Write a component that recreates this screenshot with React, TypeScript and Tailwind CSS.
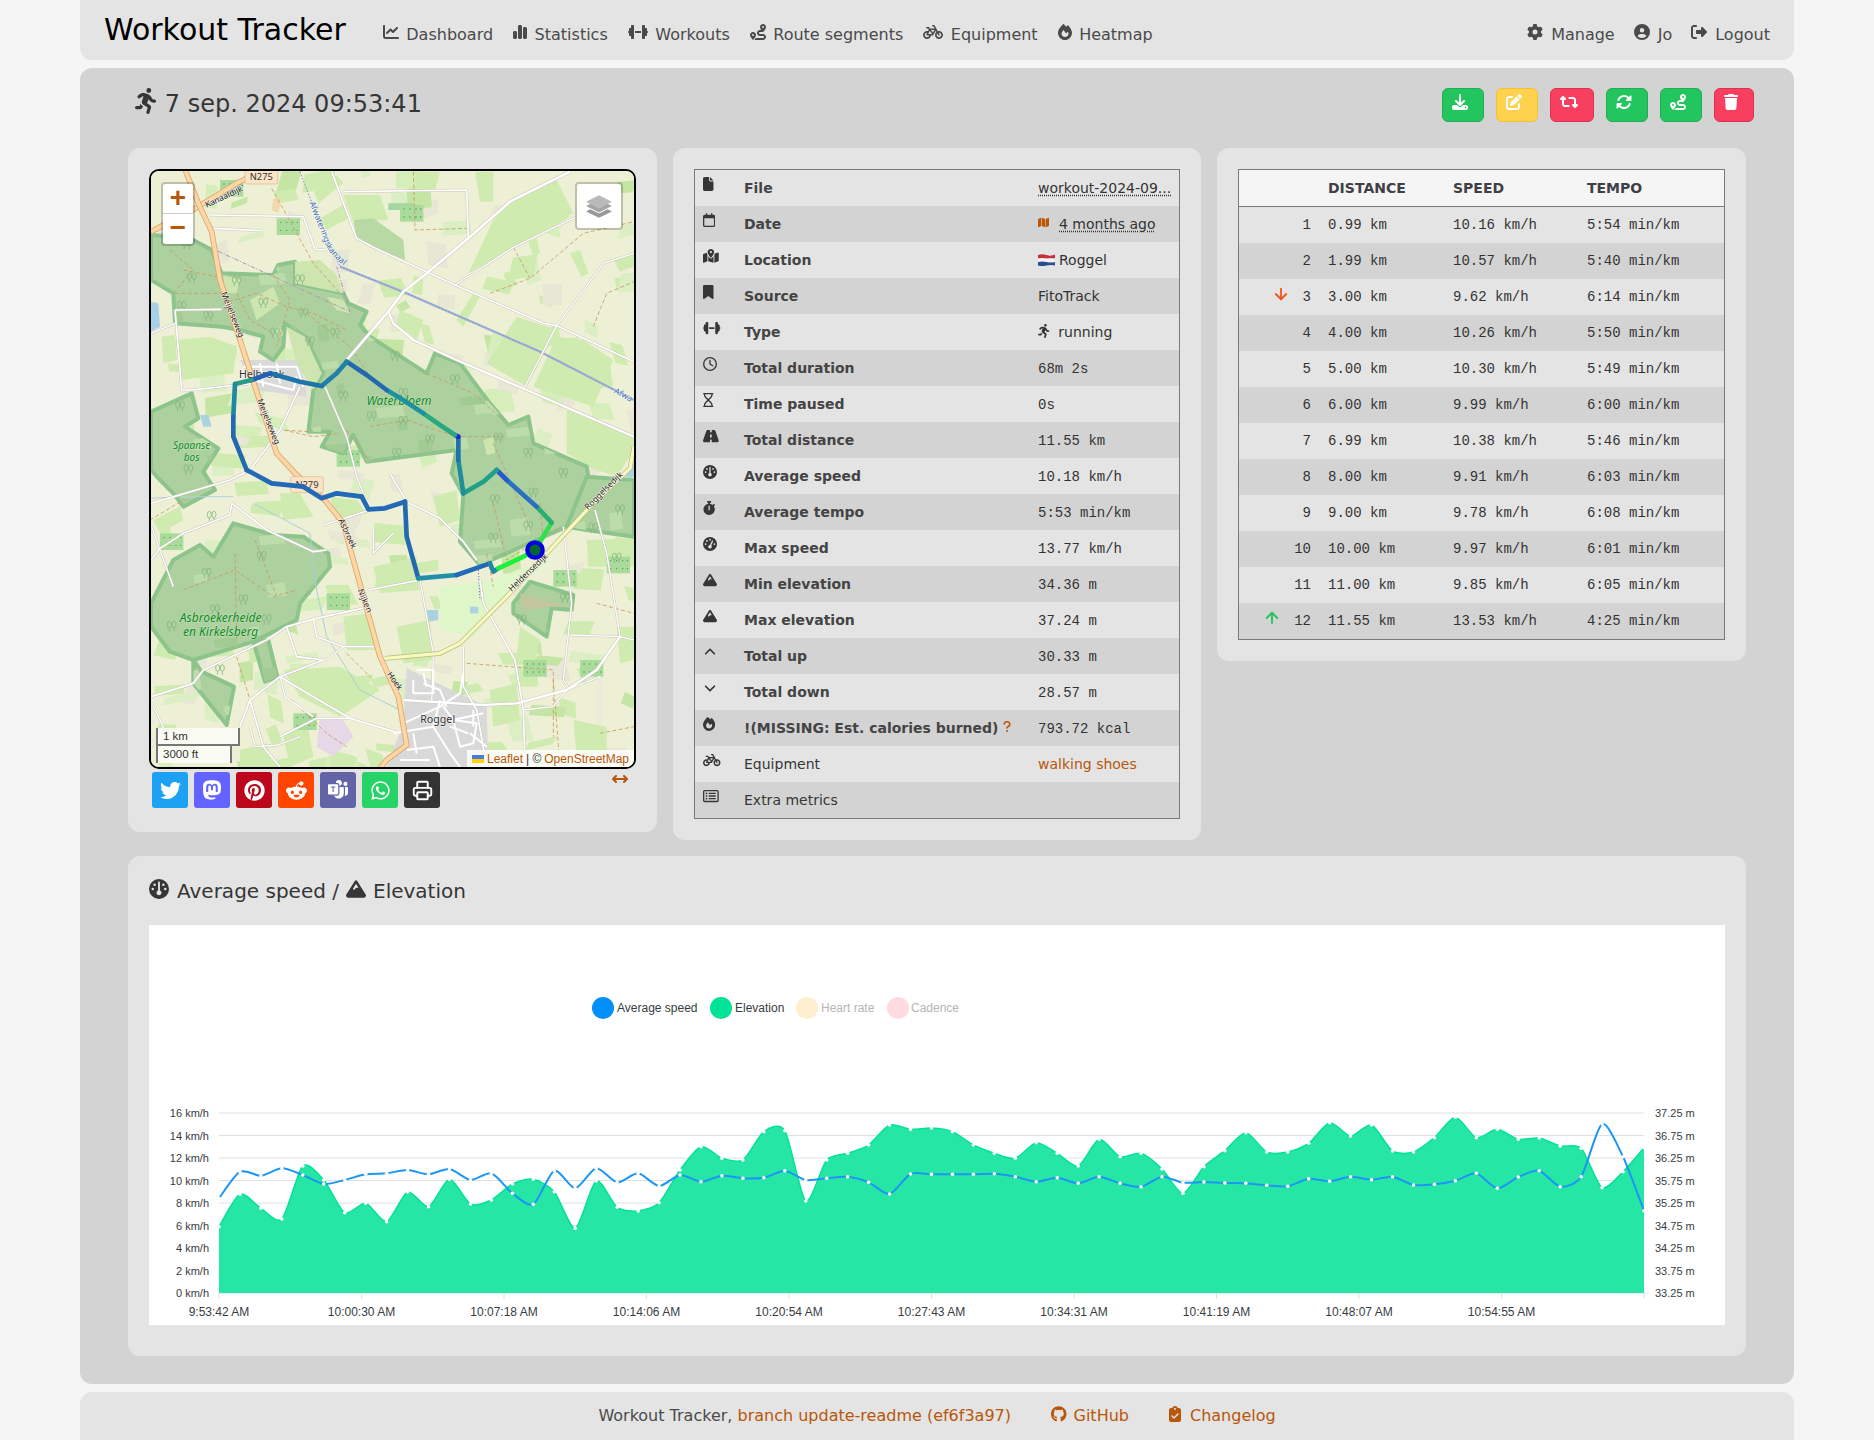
import React from "react";
import {
  FaBicycle, FaBookmark, FaChartLine, FaChartSimple, FaCircleUser, FaClipboardCheck, FaDownload, FaDumbbell, FaFile,
  FaFire, FaGauge, FaGaugeHigh, FaGear, FaGithub, FaMap, FaMapLocationDot, FaMastodon, FaMountain, FaPenToSquare,
  FaPersonRunning, FaPinterest, FaQuestion, FaRedditAlien, FaRetweet, FaRightFromBracket, FaRoad, FaRoute, FaRotate,
  FaStopwatch, FaTrash, FaTwitter, FaWhatsapp, FaAngleUp, FaAngleDown, FaRegCalendar, FaRegClock, FaRegHourglass, FaRegRectangleList, FaArrowsLeftRight,
} from "react-icons/fa6";
import { BsMicrosoftTeams } from "react-icons/bs";
import { ArrowDown, ArrowUp, Printer } from "lucide-react";

const sans = "font-['DejaVu_Sans',sans-serif]";
const mono = "font-['Liberation_Mono',monospace]";
const orange = "text-[#b85709]";

const navLeft = [
  { icon: <FaChartLine className="h-[16px] w-[16px]" />, label: "Dashboard" },
  { icon: <FaChartSimple className="h-[16px] w-[14px]" />, label: "Statistics" },
  { icon: <FaDumbbell className="h-[16px] w-[20px]" />, label: "Workouts" },
  { icon: <FaRoute className="h-[16px] w-[16px]" />, label: "Route segments" },
  { icon: <FaBicycle className="h-[16px] w-[20px]" />, label: "Equipment" },
  { icon: <FaFire className="h-[16px] w-[14px]" />, label: "Heatmap" },
];
const navRight = [
  { icon: <FaGear className="h-[16px] w-[16px]" />, label: "Manage" },
  { icon: <FaCircleUser className="h-[16px] w-[16px]" />, label: "Jo" },
  { icon: <FaRightFromBracket className="h-[16px] w-[16px]" />, label: "Logout" },
];

const infoRows: { icon: React.ReactNode; label: string; value: React.ReactNode; plain?: boolean }[] = [
  { icon: <FaFile className="h-[14px] w-[10.5px]" />, label: "File", value: <span className="underline decoration-dotted underline-offset-2">workout-2024-09...</span> },
  {
    icon: <FaRegCalendar className="h-[14px] w-[12.25px]" />, label: "Date",
    value: (
      <span className="flex items-center gap-[10px]">
        <FaMap preserveAspectRatio="none" className={`h-[11px] w-[11px] -mt-[3px] ${orange}`} />
        <span className="underline decoration-dotted underline-offset-2">4 months ago</span>
      </span>
    ),
  },
  {
    icon: <FaMapLocationDot className="h-[14px] w-[15.75px]" />, label: "Location",
    value: (
      <span className="flex items-center gap-[4px]">
        <svg viewBox="0 0 17 12" className="w-[17px] h-[12px]">
          <path d="M0 1Q4 -.5 8.500 1T17 .5V4.500Q13 3.500 8.500 4.500T0 4.500Z" fill="#c8313e" />
          <path d="M0 4.500Q4 3.500 8.500 4.500T17 4.500V8Q13 7 8.500 8T0 8Z" fill="#f5f5f5" />
          <path d="M0 8Q4 7 8.500 8T17 8V11.500Q13 10.500 8.500 11.500T0 11.500Z" fill="#2a4d95" />
        </svg>
        Roggel
      </span>
    ),
  },
  { icon: <FaBookmark className="h-[14px] w-[10.5px]" />, label: "Source", value: "FitoTrack" },
  {
    icon: <FaDumbbell className="h-[14px] w-[17.5px]" />, label: "Type",
    value: (
      <span className="flex items-center gap-2">
        <FaPersonRunning className="h-[14px] w-[12.25px] -mt-[3px]" />
        running
      </span>
    ),
  },
  { icon: <FaRegClock className="h-[14px] w-[14px]" />, label: "Total duration", value: <span className={mono}>68m 2s</span> },
  { icon: <FaRegHourglass className="h-[14px] w-[10.5px]" />, label: "Time paused", value: <span className={mono}>0s</span> },
  { icon: <FaRoad className="h-[14px] w-[15.75px]" />, label: "Total distance", value: <span className={mono}>11.55 km</span> },
  { icon: <FaGauge className="h-[14px] w-[14px]" />, label: "Average speed", value: <span className={mono}>10.18 km/h</span> },
  { icon: <FaStopwatch className="h-[14px] w-[12.25px]" />, label: "Average tempo", value: <span className={mono}>5:53 min/km</span> },
  { icon: <FaGaugeHigh className="h-[14px] w-[14px]" />, label: "Max speed", value: <span className={mono}>13.77 km/h</span> },
  { icon: <FaMountain className="h-[14px] w-[14px]" />, label: "Min elevation", value: <span className={mono}>34.36 m</span> },
  { icon: <FaMountain className="h-[14px] w-[14px]" />, label: "Max elevation", value: <span className={mono}>37.24 m</span> },
  { icon: <FaAngleUp className="h-[14px] w-[14px]" />, label: "Total up", value: <span className={mono}>30.33 m</span> },
  { icon: <FaAngleDown className="h-[14px] w-[14px]" />, label: "Total down", value: <span className={mono}>28.57 m</span> },
  {
    icon: <FaFire className="h-[14px] w-[12.25px]" />,
    label: "!(MISSING: Est. calories burned)",
    value: <span className={mono}>793.72 kcal</span>,
  },
  { icon: <FaBicycle className="h-[14px] w-[17.5px]" />, label: "Equipment", plain: true, value: <span className={orange}>walking shoes</span> },
  { icon: <FaRegRectangleList className="h-[14px] w-[15.75px]" />, label: "Extra metrics", plain: true, value: "" },
];

const laps = [
  ["1", "0.99 km", "10.16 km/h", "5:54 min/km"],
  ["2", "1.99 km", "10.57 km/h", "5:40 min/km"],
  ["3", "3.00 km", "9.62 km/h", "6:14 min/km"],
  ["4", "4.00 km", "10.26 km/h", "5:50 min/km"],
  ["5", "5.00 km", "10.30 km/h", "5:49 min/km"],
  ["6", "6.00 km", "9.99 km/h", "6:00 min/km"],
  ["7", "6.99 km", "10.38 km/h", "5:46 min/km"],
  ["8", "8.00 km", "9.91 km/h", "6:03 min/km"],
  ["9", "9.00 km", "9.78 km/h", "6:08 min/km"],
  ["10", "10.00 km", "9.97 km/h", "6:01 min/km"],
  ["11", "11.00 km", "9.85 km/h", "6:05 min/km"],
  ["12", "11.55 km", "13.53 km/h", "4:25 min/km"],
];

// map drawing, coordinates are 3x page pixels from the map corner region
const forests = [
  "33,225 150,235 215,270 245,340 400,345 415,315 465,305 465,370 610,400 625,430 680,455 660,495 690,530 860,640 885,580 960,610 1050,730 1105,795 1165,770 1180,850 1340,920 1345,950 1280,1100 1190,1140 1020,1215 960,1145 970,1005 935,940 950,870 680,905 640,825 610,880 545,860 570,815 505,815 520,690 550,640 495,530 435,490 430,560 400,600 360,575 370,530 300,510 245,500 105,490 100,400 33,360",
  "33,755 155,700 175,775 135,800 235,865 190,935 225,990 130,1040 100,1000 60,960 33,930",
  "33,1330 100,1200 180,1155 220,1190 280,1090 400,1125 490,1130 565,1180 570,1220 480,1330 470,1380 340,1445 160,1500 90,1475 33,1400",
  "340,1445 385,1440 412,1550 375,1565",
  "160,1500 185,1535 282,1580 260,1695 160,1570",
  "1120,1330 1170,1265 1300,1305 1295,1350 1235,1345 1220,1430 1120,1360",
  "1280,1100 1340,950 1482,960 1482,1130 1340,1110",
];
const pale = [
  "465,305 540,300 590,345 610,400 465,370",
  "330,420 400,380 420,430 350,480",
  "560,410 610,420 630,460 590,450",
  "1030,840 1060,830 1065,880 1040,885",
  "440,500 495,530 545,640 520,690 470,610",
  "250,345 300,360 290,400 255,400",
];
const meadow = [
  "400,95 465,85 475,120 415,130", "520,90 590,45 610,70 535,130", "540,175 620,130 625,175 560,210", "610,105 720,105 745,180 640,185",
  "820,35 900,35 885,90 825,90", "1005,35 1060,35 1060,125 1020,125", "1060,180 1110,125 1210,75 1290,170 1125,262 1060,300 985,340",
  "1210,75 1250,60 1300,160 1260,175", "1165,245 1190,235 1200,280 1180,290", "1090,340 1120,330 1130,375 1105,385", "1290,280 1320,270 1345,340 1325,350",
  "1420,300 1482,280 1482,320 1440,335", "950,480 1000,400 1020,410 970,500", "780,450 850,480 830,540 770,490", "1040,610 1130,470 1250,510 1160,680",
  "1250,530 1330,540 1420,600 1360,740 1180,680", "1280,750 1482,830 1482,870 1430,950 1345,920 1280,880", "105,540 210,530 290,560 280,640 125,660",
  "175,570 290,555 290,590 175,600", "65,530 105,525 110,600 70,610", "570,1010 650,1020 680,1060 590,1080", "60,1100 85,1085 100,1150 70,1160",
  "555,1275 625,1275 655,1335 575,1330", "1340,1140 1482,1135 1482,1220 1345,1220", "1130,1520 1190,1515 1195,1580 1145,1580", "1310,1525 1370,1530 1330,1570",
  "430,1530 600,1520 720,1590 600,1670 480,1610", "1050,1590 1130,1570 1140,1680 1060,1700", "1300,1680 1400,1700 1400,1780 1310,1790",
  "700,1220 830,1190 840,1290 720,1300", "880,1010 950,990 960,1080 900,1100", "1330,1000 1400,1080 1380,1120 1320,1090",
  "610,1370 690,1360 720,1470 620,1470", "770,1400 870,1380 880,1500 790,1510", "300,1770 380,1750 400,1821 300,1821", "430,1730 500,1680 520,1790 450,1821", "580,1770 650,1790 640,1821 570,1821",
  "40,1080 120,1040 130,1080 60,1120", "420,1000 480,1000 520,1070 430,1080", "1140,1400 1200,1440 1180,1530 1130,1500", "1430,1400 1482,1400 1482,1500 1440,1510",
];
const tracks = [
  "90,270 160,330 100,400 200,400 245,400", "130,330 230,350", "290,400 330,480 400,520", "250,430 350,400 440,440 520,460 620,510", "400,345 450,420 410,560",
  "500,460 630,560 690,650", "395,85 520,310 600,400", "820,35 825,210 985,205", "860,640 1000,700 1100,790", "620,810 690,905", "690,800 800,780 950,830 1100,830",
  "1050,400 1170,355 1330,220 1482,185", "1120,262 1170,355", "1360,500 1400,400 1482,365", "505,815 430,810 520,830 600,820", "1060,850 1170,1100", "1060,1030 1100,1200 1260,1100", "1200,1030 1210,1140",
  "130,1290 285,1230 400,1310 470,1290", "285,1180 290,1440", "345,1140 410,1310", "30,1080 130,1020 150,1020", "290,1490 330,1620", "455,1620 560,1720 620,1760", "620,1480 700,1560", "980,1510 1240,1530 1240,1730",
  "1240,1560 1260,1821", "1380,1720 1482,1700", "1370,1330 1482,1360", "1040,1180 1060,1280",
];
const whiteRoads: [string, number][] = [
  ["575,35 650,235 700,262 945,375 1210,490 1250,497 1482,605", 5],
  ["1290,35 1110,125 985,235 860,340 790,395 745,455 620,600", 8],
  ["610,95 980,90 985,235", 5],
  ["745,455 760,490 820,540 950,600 1160,690 1482,830", 7],
  ["945,375 1120,262 1310,170", 4],
  ["1250,497 1390,310 1482,280", 4],
  ["1250,497 1150,690", 4],
  ["210,165 490,170 525,268 560,270", 5],
  ["215,205 365,212", 5],
  ["105,450 245,448", 5],
  ["105,450 125,690 155,690 340,670", 5],
  ["33,520 105,490", 4],
  ["555,680 620,830 650,950 670,1000", 4],
  ["480,680 420,810 330,930 270,960 33,1030", 5],
  ["275,1030 270,1065 130,1120 60,1165 33,1200", 5],
  ["275,1030 380,1110 520,1175 560,1170", 5],
  ["750,940 800,1025 900,1075 970,1145 1010,1200", 5],
  ["800,1025 690,1050 550,1095", 5],
  ["840,1260 880,1480 875,1630", 4],
  ["685,1290 840,1260", 4],
  ["690,1340 530,1375 440,1400 380,1440", 5],
  ["1020,1260 1030,1330 1125,1500 1150,1650 1155,1821", 5],
  ["1365,1050 1400,1180 1440,1430 1482,1440", 4],
  ["1440,1430 1370,1530 1280,1590 1130,1630 1030,1635 790,1620", 7],
  ["1270,1100 1295,1330 1270,1560 1290,1590", 4],
  ["1280,1590 1380,1550 1380,1690", 4],
  ["520,1375 530,1430 610,1460 720,1460", 5],
  ["440,1400 470,1490 550,1500 420,1550 330,1620 300,1700", 5],
  ["33,1610 130,1580 160,1570", 5],
  ["420,1550 520,1610 630,1675 780,1720", 5],
  ["330,1620 370,1760 420,1821", 5],
  ["420,1730 530,1675 640,1675", 5],
  ["33,1760 70,1700 40,1640", 4],
  ["970,1460 970,1580 1010,1650 1040,1821", 5],
  ["700,1110 700,1180 760,1120", 4],
  ["160,1570 190,1530 380,1440", 5],
  ["1290,1425 1440,1430", 4],
  ["35,1100 60,1170 100,1280", 4],
  ["420,1550 435,1610 520,1670", 4],
  ["330,1700 345,1760 415,1755 480,1730", 4],
  ["610,1460 550,1505", 4],
  ["1150,1650 1240,1640 1280,1590", 4],
];
const villageRoads = [
  "830,1530 880,1530 880,1600 820,1600 820,1560", "850,1570 900,1590 920,1640", "790,1690 900,1640 960,1600 970,1540", "910,1640 940,1680 1030,1660", "940,1680 1010,1690 1000,1750 960,1760 940,1680",
  "760,1720 880,1700 930,1780 960,1821", "800,1770 880,1760 900,1821", "880,1700 900,1620", "990,1720 1040,1760", "780,1800 870,1800", "850,1540 860,1580", "1000,1650 1000,1700", "930,1700 985,1720", "820,1720 830,1780",
  "310,620 470,620 490,680", "340,660 460,690 470,650", "360,610 370,680", "410,610 420,670",
];
const trees = [
  [155, 355], [290, 365], [125, 440], [205, 470], [370, 430], [480, 360], [490, 460], [405, 520], [585, 520], [510, 545], [765, 590], [610, 710], [695, 770], [790, 700], [790, 785],
  [945, 660], [870, 840], [770, 880], [1075, 835], [1165, 880], [1270, 940], [1065, 1020], [1165, 1100], [1060, 1135], [1180, 1000], [120, 740], [145, 930], [215, 1070],
  [200, 1240], [310, 1320], [365, 1190], [95, 1400], [380, 1380], [225, 1350], [240, 1530], [1440, 1050], [1360, 1105], [1145, 1380], [1275, 1315], [1430, 1195], [140, 255],
];
type Seg = [string, string];
const route: Seg[] = [
  ["1185,1170 1235,1088", "#2fe04c"],
  ["1235,1088 1190,1040", "#27b070"],
  ["1190,1040 1100,960", "#2a70c0"],
  ["1100,960 1070,930", "#2858d0"],
  ["1070,930 1030,965 970,1000", "#20a088"],
  ["970,1000 955,900", "#1f8e98"],
  ["955,900 955,830", "#2070b0"],
  ["955,830 945,825", "#1a24e0"],
  ["945,825 900,795 850,760", "#2aa880"],
  ["850,760 790,720 740,690", "#2090a0"],
  ["740,690 680,645 620,605", "#2468b0"],
  ["620,605 590,640 545,678", "#2080a8"],
  ["545,678 480,665 390,640", "#1c74a8"],
  ["390,640 335,660", "#2060b8"],
  ["335,660 285,672", "#2a9a88"],
  ["285,672 280,770", "#2088a0"],
  ["280,770 280,830 320,930", "#2468b0"],
  ["320,930 395,970 490,980", "#2468b8"],
  ["490,980 545,1015 590,1000 665,1010", "#2468b8"],
  ["665,1010 685,1048 735,1045 795,1025", "#2468b8"],
  ["795,1025 800,1130 835,1255", "#2468b0"],
  ["835,1255 950,1245", "#2090a8"],
  ["950,1245 1050,1210", "#2468b8"],
  ["1050,1210 1060,1235 1075,1225", "#2088a0"],
  ["1075,1225 1150,1190 1185,1170", "#1ef03a"],
];

// small field texture, same result on every render
let seed = 11;
const rnd = () => {
  seed = (seed * 16807) % 2147483647;
  return seed / 2147483647;
};
const fieldColors = ["#cfebb0", "#d6efba", "#c4e5a4", "#e8e6d4", "#dbeec4", "#cfebb0"];
const fields = Array.from({ length: 230 }, () => {
  const x = 33 + rnd() * 1449;
  const y = 33 + rnd() * 1788;
  const w = 25 + rnd() * 80;
  const h = 18 + rnd() * 55;
  const sx = (rnd() - 0.5) * 40;
  const sy = (rnd() - 0.5) * 40;
  return {
    points: `${x},${y} ${x + w},${y + sy} ${x + w + sx},${y + sy + h} ${x + sx},${y + h}`,
    fill: fieldColors[Math.floor(rnd() * fieldColors.length)],
  };
});
const forestPatches = Array.from({ length: 110 }, () => {
  const x = 33 + rnd() * 1449;
  const y = 200 + rnd() * 1500;
  const w = 20 + rnd() * 60;
  const h = 12 + rnd() * 40;
  return { points: `${x},${y} ${x + w},${y - 8} ${x + w + 8},${y + h} ${x + 6},${y + h + 6}`, fill: rnd() > 0.5 ? "#bcdcaa" : "#a2cb94" };
});
const orchards = [[410, 175], [780, 135], [240, 60], [1150, 1500], [1320, 1500], [560, 1300], [460, 1660], [590, 870], [1400, 1190], [1240, 1230], [60, 1120]];

function Tree({ x, y }: { x: number; y: number }) {
  return (
    <g fill="none" stroke="#84b67e" strokeWidth="2.5">
      <ellipse cx={x - 7} cy={y - 6} rx="6" ry="10" />
      <ellipse cx={x + 7} cy={y - 6} rx="6" ry="10" />
      <path d={`M${x - 7} ${y + 4}v10M${x + 7} ${y + 4}v10`} />
    </g>
  );
}

function RoadLabel({ x, y, rot, children, size = 25, fill = "#222" }: { x: number; y: number; rot: number; children: string; size?: number; fill?: string }) {
  return (
    <text
      x={x} y={y} fontSize={size} fill={fill} textAnchor="middle" fontFamily="Noto Sans, sans-serif"
      transform={`rotate(${rot} ${x} ${y})`} stroke="#fff" strokeOpacity="0.6" strokeWidth="4" paintOrder="stroke"
    >
      {children}
    </text>
  );
}

function MapDrawing() {
  const orangeRoad = "135,28 175,130 215,215 240,360 300,540 345,680 410,880 470,945 550,1015 610,1090 640,1200 720,1490 775,1610 800,1755 740,1800 720,1825";
  const yellowRoad = "735,1495 900,1480 960,1450 1100,1310 1350,1040 1470,925 1482,860";
  return (
    <svg viewBox="33 33 1449 1788" preserveAspectRatio="none" className="block w-full h-full">
      <defs>
        <clipPath id="forest-clip">
          {forests.map((p) => <polygon key={p} points={p} />)}
        </clipPath>
        <path id="canal-label" d="M508 128L560 262Q585 305 655 345" />
      </defs>
      <rect x="33" y="33" width="1449" height="1788" fill="#eef0d5" />
      {fields.map((f) => <polygon key={f.points} points={f.points} fill={f.fill} />)}
      {meadow.map((p) => <polygon key={p} points={p} fill="#cfebb0" />)}
      <polygon points="900,1280 1060,1260 1130,1230 1230,1200 1100,1310 1000,1430 900,1410" fill="#dff6c9" />
      <polygon points="640,180 700,175 790,240 795,300 700,262 650,235" fill="#b8d9a4" />
      <polygon points="745,130 820,130 820,150 745,150" fill="#a3d6a0" />
      <polygon points="400,115 425,115 415,160 395,150" fill="#f0d9b0" />
      <polygon points="540,1670 610,1680 640,1730 580,1790 530,1760" fill="#e6d8e6" />
      <polygon points="800,1525 1040,1640 1045,1821 740,1821 790,1690" fill="#d9d9d9" />
      <polygon points="300,600 480,600 500,710 350,690" fill="#d9d9d9" />
      {orchards.map(([x, y]) => (
        <g key={`${x}-${y}`}>
          <rect x={x} y={y} width="70" height="50" fill="#a9dc9a" />
          {[12, 30, 48, 62].flatMap((dx) => [12, 36].map((dy) => <circle key={`${dx}-${dy}`} cx={x + dx} cy={y + dy} r="2" fill="#4f8f55" />))}
        </g>
      ))}
      {forests.map((p) => (
        <polygon key={p} points={p} fill="#add19e" stroke="#8cc48c" strokeWidth="12" strokeLinejoin="round" />
      ))}
      <g clipPath="url(#forest-clip)">
        {forestPatches.map((f) => <polygon key={f.points} points={f.points} fill={f.fill} />)}
      </g>
      {pale.map((p) => <polygon key={p} points={p} fill="#cfe5b0" />)}
      <polygon points="1140,1300 1290,1340 1230,1340 1150,1350" fill="#c3c69c" />
      <polygon points="33,425 55,430 60,500 33,515" fill="#a8d0e8" />
      <polygon points="180,765 205,765 215,800 190,800" fill="#aad3df" />
      <polygon points="1455,935 1482,910 1482,950 1460,955" fill="#aad3df" />
      <polygon points="990,1340 1015,1340 1015,1360 990,1360" fill="#aad3df" />
      <polygon points="860,1350 895,1350 895,1380 865,1385" fill="#aad3df" />
      {tracks.map((p) => (
        <polyline key={p} points={p} fill="none" stroke="#c69a62" strokeWidth="2.5" strokeDasharray="12 7" />
      ))}
      {trees.map(([x, y]) => <Tree key={`${x}-${y}`} x={x} y={y} />)}
      <polyline points="160,240 390,345 630,455 590,320" fill="none" stroke="#a89ab0" strokeWidth="3" strokeDasharray="14 5 3 5" />
      <polyline points="280,1010 120,1010 33,1015" fill="none" stroke="#b0d0e0" strokeWidth="3" />
      <polyline points="340,1030 510,1120 530,1290 560,1430 660,1590 780,1650" fill="none" stroke="#a8d0d8" strokeWidth="3" />
      <polyline points="600,320 800,400 1200,575 1482,720" fill="none" stroke="#a9b3cf" strokeWidth="7" />
      <polyline points="480,35 520,140 600,320 800,400 1200,575 1482,720" fill="none" stroke="#6f98e0" strokeWidth="3" strokeDasharray="5 5" />
      <polyline points="200,135 310,75" fill="none" stroke="#2233dd" strokeWidth="3" strokeDasharray="4 6" />
      <polyline points="1015,1230 1020,1320" fill="none" stroke="#2233dd" strokeWidth="2" strokeDasharray="4 5" />
      {whiteRoads.map(([p, w]) => (
        <polyline key={p + "c"} points={p} fill="none" stroke="#c9c5bb" strokeWidth={w + 3} strokeLinejoin="round" />
      ))}
      {whiteRoads.map(([p, w]) => (
        <polyline key={p} points={p} fill="none" stroke="#fff" strokeWidth={w} strokeLinejoin="round" />
      ))}
      {villageRoads.map((p) => (
        <polyline key={p} points={p} fill="none" stroke="#fff" strokeWidth="6" strokeLinejoin="round" />
      ))}
      <polyline points={yellowRoad} fill="none" stroke="#b8b878" strokeWidth="14" strokeLinejoin="round" />
      <polyline points={yellowRoad} fill="none" stroke="#f7fabf" strokeWidth="10" strokeLinejoin="round" />
      {["33,215 175,140 290,70 330,50", orangeRoad].map((p) => (
        <React.Fragment key={p}>
          <polyline points={p} fill="none" stroke="#dca66c" strokeWidth="17" strokeLinejoin="round" />
          <polyline points={p} fill="none" stroke="#fcd6a4" strokeWidth="12" strokeLinejoin="round" />
        </React.Fragment>
      ))}
      <rect x="315" y="28" width="98" height="44" rx="6" fill="#fbe3c6" stroke="#dcb48c" strokeWidth="2" />
      <text x="364" y="60" fontSize="28" textAnchor="middle" fill="#333" fontFamily="Noto Sans, sans-serif">N275</text>
      <rect x="452" y="950" width="98" height="48" rx="6" fill="#fbe3c6" stroke="#dcb48c" strokeWidth="2" />
      <text x="501" y="985" fontSize="28" textAnchor="middle" fill="#333" fontFamily="Noto Sans, sans-serif">N279</text>
      <RoadLabel x={255} y={118} rot={-25}>Kanaaldijk</RoadLabel>
      <RoadLabel x={270} y={467} rot={68}>Meijelseweg</RoadLabel>
      <RoadLabel x={378} y={788} rot={68}>Meijelseweg</RoadLabel>
      <RoadLabel x={615} y={1124} rot={65}>Asbroek</RoadLabel>
      <RoadLabel x={667} y={1325} rot={67}>Nijken</RoadLabel>
      <RoadLabel x={758} y={1568} rot={55}>Hoek</RoadLabel>
      <RoadLabel x={1170} y={1243} rot={-44}>Heldensedijk</RoadLabel>
      <RoadLabel x={1397} y={998} rot={-45}>Roggelsedijk</RoadLabel>
      <text fontSize="25" fill="#3f6fb0" fontFamily="Noto Sans, sans-serif" stroke="#fff" strokeOpacity="0.6" strokeWidth="4" paintOrder="stroke">
        <textPath href="#canal-label">Afwateringskanaal</textPath>
      </text>
      <RoadLabel x={1446} y={712} rot={28} fill="#3f6fb0">Afwa</RoadLabel>
      <RoadLabel x={365} y={655} rot={0} size={32} fill="#333">Helbroek</RoadLabel>
      <RoadLabel x={893} y={1690} rot={0} size={32} fill="#333">Roggel</RoadLabel>
      <g fontFamily="Noto Sans, sans-serif" fontStyle="italic" fill="#0a8a1e" textAnchor="middle" fontSize="36" stroke="#fff" strokeOpacity="0.35" strokeWidth="3" paintOrder="stroke">
        <text x="777" y="734">Waterbloem</text>
        <text x="155" y="868" fontSize="30">Spaanse</text>
        <text x="155" y="902" fontSize="30">bos</text>
        <text x="242" y="1385">Asbroekerheide</text>
        <text x="242" y="1429">en Kirkelsberg</text>
      </g>
      {route.map(([p, c]) => (
        <polyline key={p} points={p} fill="none" stroke={c} strokeWidth="14" strokeLinejoin="round" strokeLinecap="round" />
      ))}
      <circle cx="1185" cy="1170" r="23" fill="#006633" stroke="#0000e0" strokeWidth="13" />
    </svg>
  );
}

const speed = [85.3, 58.7, 62.7, 55.3, 62, 71, 67, 61.3, 60.3, 57, 61.3, 56, 67, 60.3, 80.3, 91.3, 57.7, 75.3, 55.3, 69.3, 60.3, 73, 62, 68.7, 62.7, 65.3, 64.7, 57.7, 67, 65.3, 63.7, 69.3, 81, 61, 61.3, 61.3, 61.3, 60.7, 63.7, 68.7, 64.7, 70.3, 63.7, 70.3, 73.7, 63.7, 69.7, 69, 70, 70.3, 72.3, 73.3, 65.7, 68.3, 63.7, 66.7, 63.7, 72, 71.3, 67.7, 60.3, 75.3, 64, 57.7, 73.7, 63.7, 11, 43.7, 97.7];
const elevation = [113.7, 81.3, 95.3, 106, 53, 67, 99.7, 90.3, 108.7, 79, 93.7, 66.3, 91, 87, 71, 66.3, 78.7, 115.3, 68, 94.3, 98, 89.7, 57, 33.7, 45.3, 47, 18.7, 17.7, 88, 47, 40.3, 32, 12, 16.3, 15, 18.7, 32, 40.3, 45.3, 29.7, 40.3, 53, 26.3, 43.7, 40.3, 56, 80.3, 53.7, 37.7, 19.7, 39, 39, 30.3, 9.7, 23, 12, 38, 39, 24.7, 4.3, 24.7, 16.3, 26.3, 25, 33, 35.3, 74.7, 58.7, 34.7];

const plotX = (i: number) => 219 + i * (1425 / 68);
const plotY = (v: number) => 1113 + v;

function smooth(values: number[]) {
  const pts = values.map((v, i) => [plotX(i), plotY(v)]);
  let d = `M${pts[0][0]} ${pts[0][1]}`;
  for (let i = 0; i < pts.length - 1; i++) {
    const p0 = pts[Math.max(i - 1, 0)];
    const p1 = pts[i];
    const p2 = pts[i + 1];
    const p3 = pts[Math.min(i + 2, pts.length - 1)];
    d += `C${p1[0] + (p2[0] - p0[0]) / 8} ${p1[1] + (p2[1] - p0[1]) / 8} ${p2[0] - (p3[0] - p1[0]) / 8} ${p2[1] - (p3[1] - p1[1]) / 8} ${p2[0]} ${p2[1]}`;
  }
  return d;
}

const xLabels = ["9:53:42 AM", "10:00:30 AM", "10:07:18 AM", "10:14:06 AM", "10:20:54 AM", "10:27:43 AM", "10:34:31 AM", "10:41:19 AM", "10:48:07 AM", "10:54:55 AM"];
const leftLabels = ["16 km/h", "14 km/h", "12 km/h", "10 km/h", "8 km/h", "6 km/h", "4 km/h", "2 km/h", "0 km/h"];
const rightLabels = ["37.25 m", "36.75 m", "36.25 m", "35.75 m", "35.25 m", "34.75 m", "34.25 m", "33.75 m", "33.25 m"];
const legend = [
  { cx: 603, tx: 617, color: "#008ffb", label: "Average speed", text: "#373d3f" },
  { cx: 721, tx: 735, color: "#00e396", label: "Elevation", text: "#373d3f" },
  { cx: 807, tx: 821, color: "#ffefd1", label: "Heart rate", text: "#b5b5b5" },
  { cx: 898, tx: 911, color: "#ffdae0", label: "Cadence", text: "#b5b5b5" },
];

function Chart() {
  const line = smooth(elevation);
  return (
    <svg viewBox="149 925 1576 400" className="block w-full h-[400px] bg-white" fontFamily="Liberation Sans, Arial, sans-serif">
      {legend.map((l) => (
        <g key={l.label}>
          <circle cx={l.cx} cy="1008" r="11" fill={l.color} />
          <text x={l.tx} y="1012" fontSize="12" fill={l.text}>{l.label}</text>
        </g>
      ))}
      {leftLabels.map((t, i) => (
        <g key={t}>
          <line x1="219" x2="1644" y1={1113 + i * 22.5} y2={1113 + i * 22.5} stroke="#e0e0e0" />
          <text x="209" y={1117 + i * 22.5} fontSize="11" textAnchor="end" fill="#373d3f">{t}</text>
          <text x="1655" y={1117 + i * 22.5} fontSize="11" fill="#373d3f">{rightLabels[i]}</text>
        </g>
      ))}
      <path d={`${line}L1644 1293L219 1293Z`} fill="#26e6a5" />
      <path d={line} fill="none" stroke="#00e396" strokeWidth="1.5" />
      <path d={smooth(speed)} fill="none" stroke="#1c96f5" strokeWidth="2" />
      {elevation.map((v, i) => <circle key={i} cx={plotX(i)} cy={plotY(v)} r="1.8" fill="#fff" />)}
      {speed.map((v, i) => <circle key={i} cx={plotX(i)} cy={plotY(v)} r="1.8" fill="#fff" />)}
      {xLabels.map((t, i) => (
        <g key={t}>
          <line x1={219 + i * 142.5} x2={219 + i * 142.5} y1="1293" y2="1299" stroke="#e0e0e0" />
          <text x={219 + i * 142.5} y="1316" fontSize="12" textAnchor="middle" fill="#373d3f">{t}</text>
        </g>
      ))}
      <line x1="1644" x2="1644" y1="1293" y2="1299" stroke="#e0e0e0" />
    </svg>
  );
}

const shares = [
  { bg: "bg-[#1da1f2]", icon: <FaTwitter className="size-[21px]" /> },
  { bg: "bg-[#6364ff]", icon: <FaMastodon className="size-[22px]" /> },
  { bg: "bg-[#bd081c]", icon: <FaPinterest className="size-[21px]" /> },
  { bg: "bg-[#ff4500]", icon: <FaRedditAlien className="size-[21px]" /> },
  { bg: "bg-[#6264a7]", icon: <BsMicrosoftTeams className="size-[20px]" /> },
  { bg: "bg-[#25d366]", icon: <FaWhatsapp className="size-[21px]" /> },
  { bg: "bg-[#333333]", icon: <Printer className="size-[21px]" strokeWidth={2.2} /> },
];

const actions = [
  { w: "w-[42px]", cls: "bg-[#22c55e] border-[#1fae55]", icon: <FaDownload className="size-[16px]" /> },
  { w: "w-[42px]", cls: "bg-[#ffd24d] border-[#f5c033]", icon: <FaPenToSquare className="size-[16px]" /> },
  { w: "w-[44px]", cls: "bg-[#f83f60] border-[#e0304f]", icon: <FaRetweet className="h-[16px] w-[18px]" /> },
  { w: "w-[42px]", cls: "bg-[#22c55e] border-[#1fae55]", icon: <FaRotate className="size-[16px]" /> },
  { w: "w-[42px]", cls: "bg-[#22c55e] border-[#1fae55]", icon: <FaRoute className="size-[16px]" /> },
  { w: "w-[40px]", cls: "bg-[#f83f60] border-[#e0304f]", icon: <FaTrash className="h-[16px] w-[14px]" /> },
];

export default function App() {
  return (
    <div className={`min-h-[1440px] bg-[#f5f5f5] text-[#363636] ${sans}`}>
      <div className="w-[1714px] ml-[80px]">
        <nav className="h-[60px] bg-[#e4e4e4] rounded-b-xl flex items-center pl-6 pr-6 text-[#4a4a4a]">
          <span className="text-[30px] text-black -mt-[2px] mr-[37px]">Workout Tracker</span>
          <div className="flex gap-[20px] pt-[10px]">
            {navLeft.map((item) => (
              <div key={item.label} className="flex items-center gap-[7.5px]">
                <span className="-mt-[6px]">{item.icon}</span>
                <span>{item.label}</span>
              </div>
            ))}
          </div>
          <div className="flex gap-[19px] pt-[10px] ml-auto">
            {navRight.map((item) => (
              <div key={item.label} className="flex items-center gap-[8px]">
                <span className="-mt-[6px]">{item.icon}</span>
                <span>{item.label}</span>
              </div>
            ))}
          </div>
        </nav>

        <main className="mt-2 bg-[#d3d3d3] rounded-xl pl-12 pr-12 pb-7">
          <div className="h-[80px] flex items-start justify-between pl-[7px]">
            <h1 className="flex items-center gap-[7px] text-2xl mt-[20px]">
              <FaPersonRunning className="h-[26px] w-[22.75px] -mt-[7px]" />
              7 sep. 2024 09:53:41
            </h1>
            <div className="flex gap-3 mt-5 mr-[-8px]">
              {actions.map((a, i) => (
                <button key={i} className={`${a.w} ${a.cls} h-[34px] rounded-md border text-white flex justify-center pt-[5px] pr-[7px]`}>
                  {a.icon}
                </button>
              ))}
            </div>
          </div>

          <div className="grid grid-cols-[529px_528px_529px] gap-4 items-start">
            <section className="bg-[#e4e4e4] rounded-xl px-[21px] pt-[21px] pb-6">
              <div className="relative h-[600px] rounded-[10px] border-2 border-black overflow-hidden">
                <MapDrawing />
                <div className="absolute left-[10px] top-[11px] w-[34px] rounded bg-white border-2 border-black/20 bg-clip-padding font-['Liberation_Mono',monospace] font-bold text-[#b85709] text-center">
                  <div className="h-[30px] leading-[31px] text-[28px] border-b border-[#ccc]">+</div>
                  <div className="h-[30px] leading-[31px] text-[28px]">−</div>
                </div>
                <div className="absolute right-[11px] top-[11px] size-[48px] rounded bg-white border-2 border-black/20 bg-clip-padding flex items-center justify-center">
                  <svg viewBox="0 0 26 26" className="size-[28px]">
                    <path d="M13 15 1 9 13 3l12 6z" fill="#b9b9b9" />
                    <path d="M13 19 1 13l4-2 8 4 8-4 4 2z" fill="#a5a5a5" />
                    <path d="M13 24 1 18l4-2 8 4 8-4 4 2z" fill="#989898" />
                  </svg>
                </div>
                <div className="absolute left-[5px] bottom-[4px] font-['Liberation_Sans',sans-serif] text-[11.5px] leading-[14px] text-[#333]">
                  <div className="w-[84px] h-[18px] border-2 border-t-0 border-[#777] bg-white/70 pl-[5px] pt-[1px]">1 km</div>
                  <div className="w-[76px] h-[17px] border-2 border-b-0 border-t-0 border-[#777] bg-white/70 pl-[5px] pt-[1px]">3000 ft</div>
                </div>
                <div className="absolute right-0 bottom-0 bg-white/80 px-[5px] h-[17px] flex items-center gap-[3px] font-['Liberation_Sans',sans-serif] text-[12px] text-[#333]">
                  <svg viewBox="0 0 12 8" className="w-[12px] h-[8px]">
                    <rect width="12" height="4" fill="#4c7be1" />
                    <rect y="4" width="12" height="4" fill="#ffd500" />
                  </svg>
                  <span className={orange}>Leaflet</span>
                  <span>| ©</span>
                  <span className={orange}>OpenStreetMap</span>
                </div>
              </div>
              <div className="flex items-start mt-[3px] pl-[3px]">
                <div className="flex gap-[6px]">
                  {shares.map((s, i) => (
                    <div key={i} className={`${s.bg} size-9 rounded-[3px] flex items-center justify-center text-white`}>
                      {s.icon}
                    </div>
                  ))}
                </div>
                <FaArrowsLeftRight className={`ml-auto mr-[8px] -mt-[1px] size-[16px] ${orange}`} />
              </div>
            </section>

            <section className="bg-[#e4e4e4] rounded-xl p-[21px]">
              <div className="border border-[#7a7a7a] text-sm">
                {infoRows.map((row, i) => (
                  <div key={row.label} className={`h-9 flex items-center ${i % 2 ? "bg-[#d3d3d3]" : "bg-[#e4e4e4]"}`}>
                    <div className="w-[49px] pl-2 self-start pt-[7px]">{row.icon}</div>
                    <div className={`w-[294px] flex items-center gap-[5px] ${row.plain ? "" : "font-bold text-[#444]"}`}>
                      {row.label}
                      {row.label.startsWith("!") && <FaQuestion className={`h-[13px] w-[8px] -mt-[3px] ${orange}`} />}
                    </div>
                    <div className="text-[#333]">{row.value}</div>
                  </div>
                ))}
              </div>
            </section>

            <section className="bg-[#e4e4e4] rounded-xl p-[21px]">
              <div className="border border-[#7a7a7a] text-sm">
                <div className="h-9 flex items-center bg-[#f5f5f5] border-b border-[#7a7a7a] font-bold text-[#3f3f46] box-content">
                  <div className="w-[89px]" />
                  <div className="w-[125px]">DISTANCE</div>
                  <div className="w-[134px]">SPEED</div>
                  <div>TEMPO</div>
                </div>
                {laps.map((lap, i) => (
                  <div key={lap[0]} className={`h-9 flex items-center ${mono} text-[#333] ${i % 2 ? "bg-[#d3d3d3]" : "bg-[#e4e4e4]"}`}>
                    <div className="w-[72px] flex justify-end items-center gap-[13px]">
                      {lap[0] === "3" && <ArrowDown className="size-[18px] -mt-[6px] text-[#f4511e]" strokeWidth={2.4} />}
                      {lap[0] === "12" && <ArrowUp className="size-[18px] -mt-[6px] text-[#22c55e]" strokeWidth={2.4} />}
                      <span>{lap[0]}</span>
                    </div>
                    <div className="w-[17px]" />
                    <div className="w-[125px]">{lap[1]}</div>
                    <div className="w-[134px]">{lap[2]}</div>
                    <div>{lap[3]}</div>
                  </div>
                ))}
              </div>
            </section>
          </div>

          <section className="mt-4 bg-[#e4e4e4] rounded-xl px-[21px] pb-[31px]">
            <h2 className="h-[69px] flex items-center gap-[7px] text-xl pt-[1px]">
              <FaGauge className="size-[20px] -mt-[4px] mr-[1px]" />
              Average speed /
              <FaMountain className="size-[20px] -mt-[4px]" />
              Elevation
            </h2>
            <Chart />
          </section>
        </main>

        <footer className="mt-2 h-[48px] bg-[#e4e4e4] rounded-t-xl flex items-center justify-center gap-[40px] text-[#4a4a4a]">
          <span>
            Workout Tracker, <span className={orange}>branch update-readme (ef6f3a97)</span>
          </span>
          <span className={`flex items-center gap-[7px] ${orange}`}>
            <FaGithub className="h-[16px] w-[15.5px] -mt-[4px]" /> GitHub
          </span>
          <span className={`flex items-center gap-[9px] ${orange}`}>
            <FaClipboardCheck className="h-[16px] w-[12px] -mt-[4px]" /> Changelog
          </span>
        </footer>
      </div>
    </div>
  );
}
